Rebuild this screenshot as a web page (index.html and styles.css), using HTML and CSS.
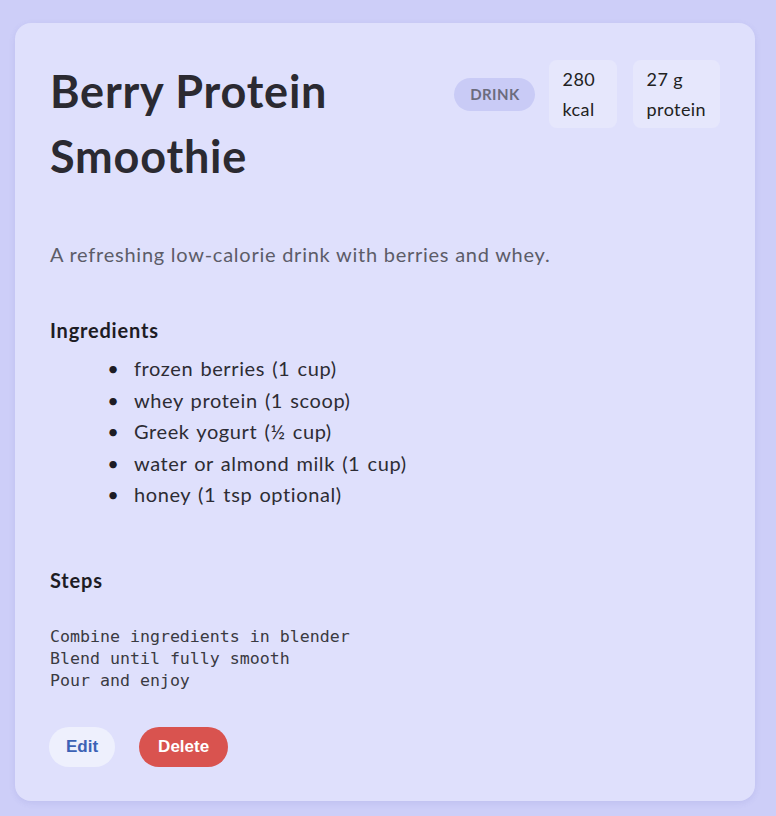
FILE: index.html
```html
<!DOCTYPE html>
<html>
<head>
<meta charset="utf-8">
<link rel="stylesheet" href="styles.css">
</head>
<body>
<article class="card">
  <header class="card-head">
    <h1 class="title">Berry Protein Smoothie</h1>
    <div class="meta">
      <span class="tag">Drink</span>
      <span class="stat">280<br>kcal</span>
      <span class="stat">27 g<br>protein</span>
    </div>
  </header>
  <p class="desc">A refreshing low-calorie drink with berries and whey.</p>
  <h3 class="section">Ingredients</h3>
  <ul class="ingredients">
    <li>frozen berries (1 cup)</li>
    <li>whey protein (1 scoop)</li>
    <li>Greek yogurt (½ cup)</li>
    <li>water or almond milk (1 cup)</li>
    <li>honey (1 tsp optional)</li>
  </ul>
  <h3 class="section steps-title">Steps</h3>
  <pre class="steps">Combine ingredients in blender
Blend until fully smooth
Pour and enjoy</pre>
  <div class="actions">
    <button class="btn btn-edit">Edit</button>
    <button class="btn btn-delete">Delete</button>
  </div>
</article>
</body>
</html>
```
FILE: styles.css
```css
html, body {
  margin: 0;
  padding: 0;
}
body {
  background: #cdcef8;
  padding: 23px 21px 15px 15px;
  font-family: "Lato", "Noto Sans", sans-serif;
  color: #2e2e36;
}
.card {
  background: #dfe0fc;
  border-radius: 16px;
  padding: 36px 35px 34px 35px;
  height: 778px;
  box-sizing: border-box;
  box-shadow: 0 2px 6px rgba(90, 90, 180, 0.12);
}
.card-head {
  display: flex;
  justify-content: space-between;
  align-items: flex-start;
}
.title {
  margin: 0;
  font-size: 45px;
  line-height: 65px;
  font-weight: 700;
  letter-spacing: 0.8px;
  color: #2b2a31;
  width: 340px;
}
.meta {
  display: flex;
  align-items: center;
  margin-top: 1px;
}
.tag {
  background: #c9cbf6;
  color: #6c6c7e;
  font-weight: 700;
  font-size: 15px;
  line-height: 17px;
  text-transform: uppercase;
  border-radius: 999px;
  padding: 8px 15px 8px 16px;
  letter-spacing: 0.4px;
  margin-right: 14px;
}
.stat {
  background: #e6e7fc;
  border-radius: 8px;
  padding: 4px 14px;
  min-width: 40px;
  font-size: 18px;
  line-height: 30px;
  letter-spacing: 0.4px;
  color: #222;
}
.stat + .stat {
  margin-left: 16px;
}
.desc {
  margin: 50px 0 0;
  font-size: 20px;
  line-height: 30px;
  letter-spacing: 0.75px;
  color: #5c5c68;
}
.section {
  margin: 48px 0 0;
  font-size: 20px;
  line-height: 26px;
  font-weight: 700;
  letter-spacing: 0.8px;
  color: #1d1c24;
}
.ingredients {
  margin: 10px 0 0;
  padding-left: 84px;
  font-size: 20px;
  line-height: 31.5px;
  letter-spacing: 0.6px;
  word-spacing: 1.5px;
  color: #2d2c34;
}
.ingredients li::marker {
  content: "\2022\00a0\00a0";
  font-size: 20px;
  color: #1d1c24;
}
.steps-title {
  margin-top: 56px;
}
.steps {
  margin: 33px 0 0;
  font-family: "DejaVu Sans Mono", monospace;
  font-size: 16.6px;
  line-height: 22px;
  color: #3a3a42;
}
.actions {
  display: flex;
  gap: 24px;
  margin-top: 35px;
}
.btn {
  border: none;
  border-radius: 999px;
  font-family: "Liberation Sans", Arial, sans-serif;
  font-weight: 700;
  font-size: 17px;
  height: 40px;
  padding: 0 17px;
}
.btn-edit {
  background: #eef0fd;
  color: #3c62b5;
  margin-left: -1px;
}
.btn-delete {
  background: #d9534f;
  color: #fff;
  padding: 0 19px;
}
```
